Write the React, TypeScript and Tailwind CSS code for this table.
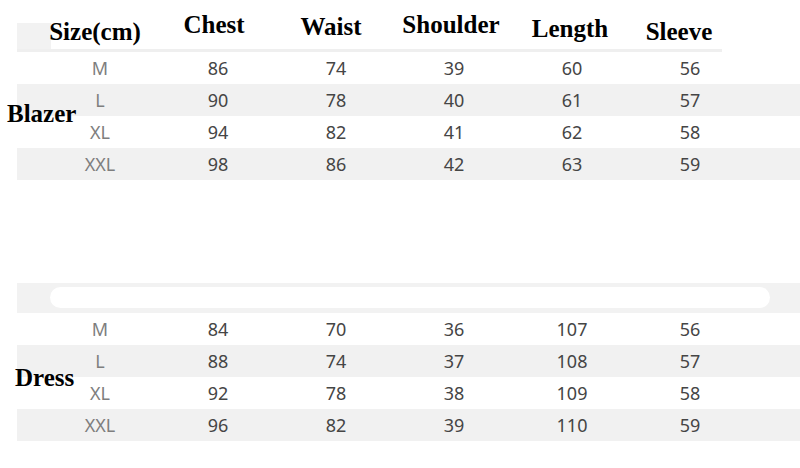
import React from "react";

const serif = { fontFamily: '"Liberation Serif", "Times New Roman", serif' };
const sans = { fontFamily: '"Noto Sans", "Open Sans", sans-serif' };

type Row = [string, string, string, string, string, string];

const blazer: Row[] = [
  ["M", "86", "74", "39", "60", "56"],
  ["L", "90", "78", "40", "61", "57"],
  ["XL", "94", "82", "41", "62", "58"],
  ["XXL", "98", "86", "42", "63", "59"],
];

const dress: Row[] = [
  ["M", "84", "70", "36", "107", "56"],
  ["L", "88", "74", "37", "108", "57"],
  ["XL", "92", "78", "38", "109", "58"],
  ["XXL", "96", "82", "39", "110", "59"],
];

function DataRows({ rows }: { rows: Row[] }) {
  return (
    <div className="flex flex-col" style={sans}>
      {rows.map((r, i) => (
        <div
          key={r[0]}
          className={`flex h-[32px] items-stretch text-[18px] leading-[32px] ${
            i % 2 === 1 ? "bg-[#f1f1f1]" : "bg-white"
          }`}
        >
          <div className="w-[142px] shrink-0 pl-[24px] text-center text-[#7e7e7e]">{r[0]}</div>
          <div className="w-[118px] shrink-0 text-center text-[#454545]">{r[1]}</div>
          <div className="w-[118px] shrink-0 text-center text-[#454545]">{r[2]}</div>
          <div className="w-[118px] shrink-0 text-center text-[#454545]">{r[3]}</div>
          <div className="w-[118px] shrink-0 text-center text-[#454545]">{r[4]}</div>
          <div className="w-[118px] shrink-0 text-center text-[#454545]">{r[5]}</div>
        </div>
      ))}
    </div>
  );
}

export default function App() {
  return (
    <div className="relative h-[468px] w-[800px] overflow-hidden bg-white">
      {/* Blazer table */}
      <div className="pl-[17px]">
        <div
          className="flex h-[52px] w-[705px] border-b-[3px] border-[#efefef] text-[25px] font-bold leading-[25px] text-black"
          style={serif}
        >
          <div className="w-[142px] shrink-0 bg-[linear-gradient(to_bottom,#ffffff_0,#ffffff_23px,#f2f2f2_23px)] bg-[length:34px_100%] bg-no-repeat pl-[24px] pr-[10px] pt-[19px] text-center">
            Size(cm)
          </div>
          <div className="w-[118px] shrink-0 pr-[8px] pt-[12px] text-center">Chest</div>
          <div className="w-[118px] shrink-0 pr-[10px] pt-[14px] text-center">Waist</div>
          <div className="w-[118px] shrink-0 pr-[6px] pt-[12px] text-center">Shoulder</div>
          <div className="w-[118px] shrink-0 pr-[4px] pt-[16px] text-center">Length</div>
          <div className="w-[91px] shrink-0 pl-[5px] pt-[19px] text-center">Sleeve</div>
        </div>
        <DataRows rows={blazer} />
      </div>

      <div className="h-[103px]" />

      {/* Dress table */}
      <div className="pl-[17px]">
        <div className="h-[30px] bg-[#f2f2f2] pl-[33px] pr-[30px] pt-[4px]">
          <div className="h-[21px] rounded-full bg-white" />
        </div>
        <DataRows rows={dress} />
      </div>

      {/* Side labels over the rows */}
      <div
        className="absolute left-[7px] top-[101px] text-[25px] font-bold leading-[25px] text-black"
        style={serif}
      >
        Blazer
      </div>
      <div
        className="absolute left-[15px] top-[365px] text-[25px] font-bold leading-[25px] text-black"
        style={serif}
      >
        Dress
      </div>
    </div>
  );
}
